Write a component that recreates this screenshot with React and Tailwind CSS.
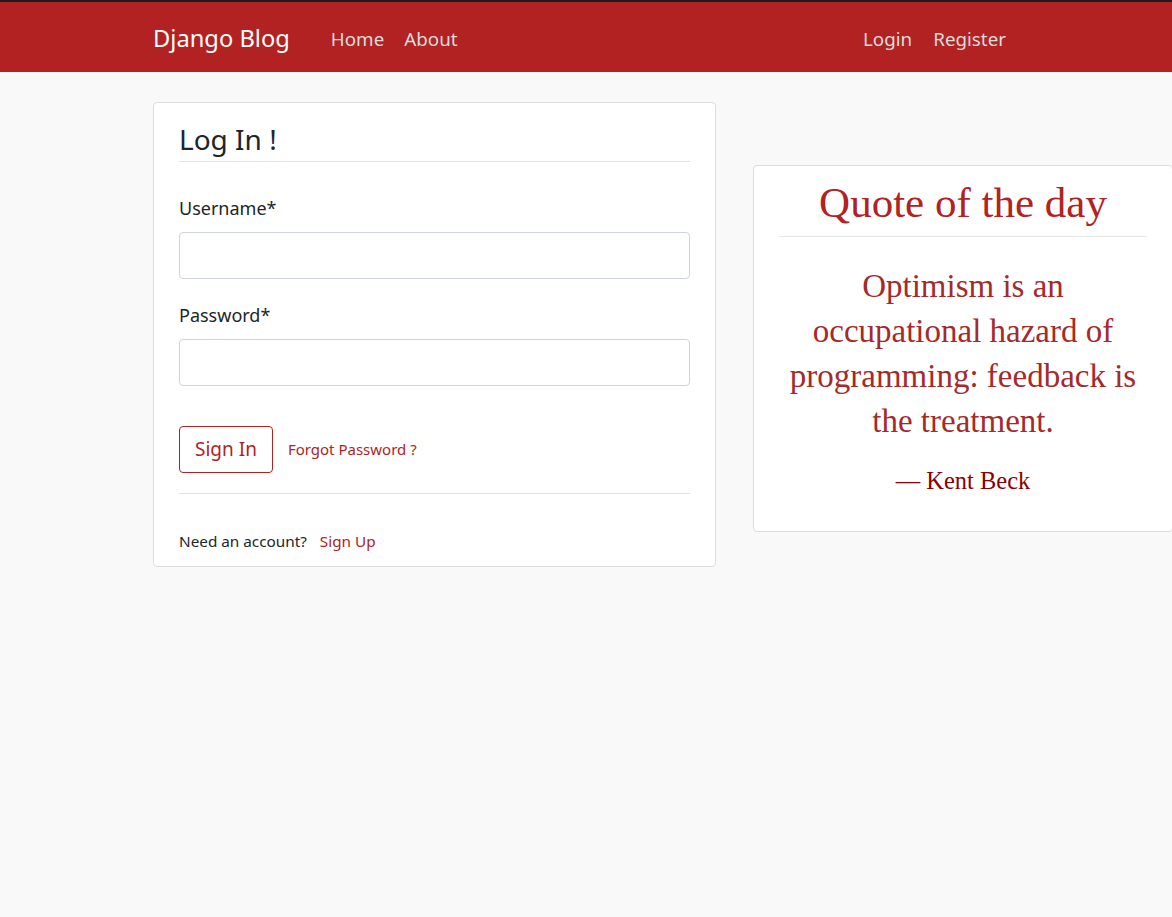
import React from 'react';

const sans = { fontFamily: '"Noto Sans", "Open Sans", sans-serif' };

function Navbar() {
  return (
    <header className="bg-[#b22222] border-t-2 border-[#1c1c1c] h-[72px]">
      <nav className="mx-auto w-[866px] h-[70px] pt-[4px] flex items-center">
        <a className="text-white text-[23.7px] mr-[41px]">Django Blog</a>
        <a className="text-[#dcdcdc] text-[18.8px] mr-[20px]">Home</a>
        <a className="text-[#dcdcdc] text-[18.8px]">About</a>
        <div className="ml-auto flex items-center pr-[13px]">
          <a className="text-[#dcdcdc] text-[18.8px] mr-[21px]">Login</a>
          <a className="text-[#dcdcdc] text-[18.8px]">Register</a>
        </div>
      </nav>
    </header>
  );
}

function LoginCard() {
  return (
    <div className="w-[563px] shrink-0 bg-white border border-[#dcdcdc] rounded-[4px] px-[25px] pt-[16px] pb-[10px]">
      <form>
        <h2 className="text-[28px] leading-[40px] text-[#212529] border-b border-[#e2e2e2] pb-[2px]">Log In !</h2>
        <div className="mt-[34px]">
          <label className="block text-[18px] text-[#212529] leading-[24px]">Username*</label>
          <input type="text" className="mt-[12px] block w-full h-[47px] border border-[#ced4da] rounded-[4px] bg-white" />
        </div>
        <div className="mt-[24px]">
          <label className="block text-[18px] text-[#212529] leading-[24px]">Password*</label>
          <input type="password" className="mt-[12px] block w-full h-[47px] border border-[#ced4da] rounded-[4px] bg-white" />
        </div>
        <div className="mt-[40px] flex items-center">
          <button type="submit" className="h-[47px] px-[15px] border border-[#b22222] rounded-[4px] text-[#b22222] text-[19px]">Sign In</button>
          <a className="ml-[15px] text-[#b22222] text-[15px]">Forgot Password ?</a>
        </div>
      </form>
      <div className="mt-[20px] border-t border-[#e2e2e2] pt-[36px] pb-[4px] text-[15.3px] text-[#212529] leading-[22px]">
        Need an account? <a className="ml-[9px] text-[#b22222]">Sign Up</a>
      </div>
    </div>
  );
}

function QuoteCard() {
  const serif = { fontFamily: '"Liberation Serif", "DejaVu Serif", serif' };
  return (
    <div className="mt-[63px] w-[420px] shrink-0 bg-white border border-[#dcdcdc] rounded-[4px] px-[25px] pt-[12px] pb-[35px] text-center" style={serif}>
      <h2 className="text-[43px] leading-[50px] text-[#b22222] border-b border-[#e6e6e6] pb-[8px]">Quote of the day</h2>
      <p className="mt-[27px] text-[33px] leading-[45px] text-[#a52a2a]">
        Optimism is an occupational hazard of programming: feedback is the treatment.
      </p>
      <p className="mt-[22px] text-[24.5px] leading-[30px] text-[#8b0000]">— Kent Beck</p>
    </div>
  );
}

export default function App() {
  return (
    <div className="min-h-[917px] bg-[#f9f9f9] overflow-x-hidden" style={sans}>
      <Navbar />
      <main className="mx-auto w-[866px] pt-[30px] flex items-start gap-[37px]">
        <LoginCard />
        <QuoteCard />
      </main>
    </div>
  );
}
